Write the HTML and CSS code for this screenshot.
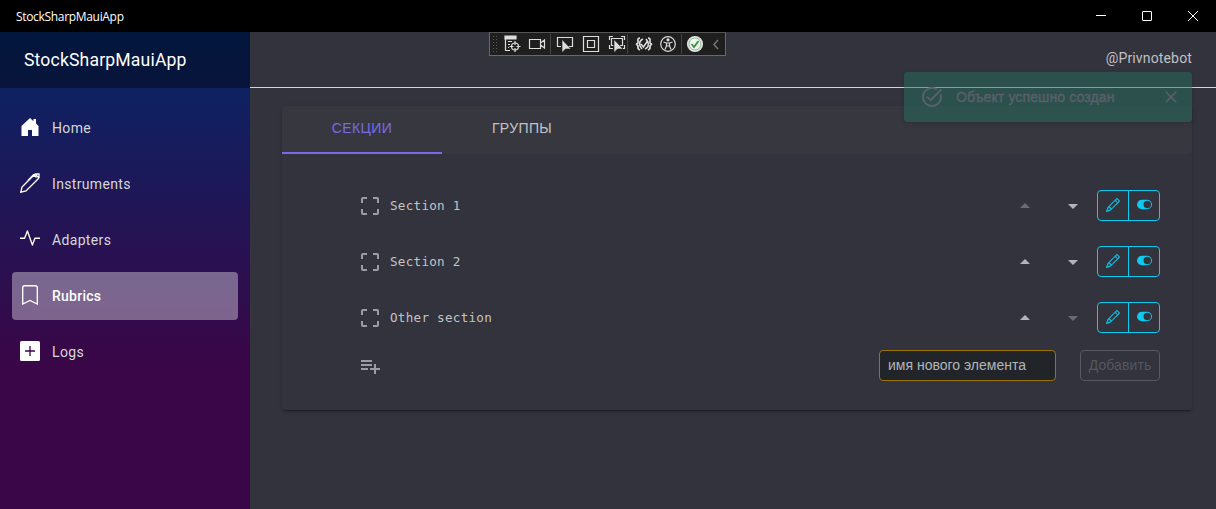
FILE: index.html
```html
<!DOCTYPE html>
<html lang="ru">
<head>
<meta charset="utf-8">
<title>StockSharpMauiApp</title>
<link rel="stylesheet" href="styles.css">
</head>
<body>
<svg width="0" height="0" class="defs">
  <symbol id="pencil" viewBox="0 0 16 16"><path d="M12.146.146a.5.5 0 0 1 .708 0l3 3a.5.5 0 0 1 0 .708l-10 10a.5.5 0 0 1-.168.11l-5 2a.5.5 0 0 1-.65-.65l2-5a.5.5 0 0 1 .11-.168l10-10zM11.207 2.5 13.5 4.793 14.793 3.5 12.5 1.207 11.207 2.5zm1.586 3L10.5 3.207 4 9.707V10h.5a.5.5 0 0 1 .5.5v.5h.5a.5.5 0 0 1 .5.5v.5h.293l6.5-6.5zm-9.761 5.175-.106.106-1.528 3.821 3.821-1.528.106-.106A.5.5 0 0 1 5 12.500V12h-.5a.5.5 0 0 1-.5-.5V11h-.5a.5.5 0 0 1-.468-.325z"/></symbol>
  <symbol id="toggle" viewBox="0 0 16 16"><path fill-rule="evenodd" d="M5 3a5 5 0 0 0 0 10h6a5 5 0 0 0 0-10H5zm6 9a4 4 0 1 1 0-8 4 4 0 0 1 0 8z"/></symbol>
  <symbol id="scan" viewBox="0 0 24 24"><path d="M3 5v4h2V5h4V3H5a2 2 0 0 0-2 2zm2 10H3v4a2 2 0 0 0 2 2h4v-2H5v-4zm14 4h-4v2h4a2 2 0 0 0 2-2v-4h-2v4zm0-16h-4v2h4v4h2V5a2 2 0 0 0-2-2z"/></symbol>
  <symbol id="up" viewBox="0 0 24 24"><path d="m7 14 5-5 5 5z"/></symbol>
  <symbol id="down" viewBox="0 0 24 24"><path d="m7 10 5 5 5-5z"/></symbol>
</svg>

<header class="titlebar">
  <span class="window-title">StockSharpMauiApp</span>
  <div class="window-buttons">
    <svg viewBox="0 0 12 12"><path d="M1 5.5h10"/></svg>
    <svg viewBox="0 0 12 12"><rect x="1.5" y="1.5" width="9" height="9" rx=".5"/></svg>
    <svg viewBox="0 0 12 12"><path d="m1 1 10 10M11 1 1 11"/></svg>
  </div>
</header>

<div class="page">
  <aside class="sidebar">
    <div class="brand">StockSharpMauiApp</div>
    <nav class="nav">
      <a class="nav-item"><svg class="nav-icon" viewBox="0 0 20 20"><path fill="#fff" d="M10 1 1.500 9v10H8v-6h4v6h6.500V9L16 6.500V2h-2.500v2.200z"/></svg>Home</a>
      <a class="nav-item"><svg class="nav-icon line" viewBox="0 0 20 20"><path d="M.8 19.200 2 14 14 1.900l1.500-.9h3.500v3.500l-1 1.500L6 18z M8 7.500l5.500-5.800 3 2.800M15.500 1.500l3 3"/></svg>Instruments</a>
      <a class="nav-item"><svg class="nav-icon line" viewBox="0 0 20 20"><path stroke-linejoin="round" d="M0 9.200h4.600L7.400 2l5 14 2.500-6.800H20"/></svg>Adapters</a>
      <a class="nav-item active"><svg class="nav-icon line" viewBox="0 0 20 20"><path d="M2.700 19V2.700Q2.700.7 4.700.7h10.600q2 0 2 2V19L10 15.500z"/></svg>Rubrics</a>
      <a class="nav-item"><svg class="nav-icon" viewBox="0 0 20 20"><rect width="20" height="20" rx="1.500" fill="#fff"/><path stroke="#3a0647" stroke-width="1.300" d="M5 10h10M10 5v10"/></svg>Logs</a>
    </nav>
  </aside>

  <main class="main">
    <div class="top-row">@Privnotebot</div>
    <section class="card">
      <div class="tabs">
        <div class="tab selected">СЕКЦИИ</div>
        <div class="tab">ГРУППЫ</div>
      </div>
      <div class="panel">
        <div class="row">
          <svg class="glyph"><use href="#scan"/></svg><span class="name">Section 1</span>
          <svg class="arrow off"><use href="#up"/></svg><svg class="arrow"><use href="#down"/></svg>
          <div class="actions"><button><svg><use href="#pencil"/></svg></button><button><svg class="toggle"><use href="#toggle"/></svg></button></div>
        </div>
        <div class="row">
          <svg class="glyph"><use href="#scan"/></svg><span class="name">Section 2</span>
          <svg class="arrow"><use href="#up"/></svg><svg class="arrow"><use href="#down"/></svg>
          <div class="actions"><button><svg><use href="#pencil"/></svg></button><button><svg class="toggle"><use href="#toggle"/></svg></button></div>
        </div>
        <div class="row">
          <svg class="glyph"><use href="#scan"/></svg><span class="name">Other section</span>
          <svg class="arrow"><use href="#up"/></svg><svg class="arrow off"><use href="#down"/></svg>
          <div class="actions"><button><svg><use href="#pencil"/></svg></button><button><svg class="toggle"><use href="#toggle"/></svg></button></div>
        </div>
        <div class="add-row">
          <svg class="glyph" viewBox="0 0 24 24"><path d="M14 10H3v2h11v-2zm0-4H3v2h11V6zm4 8v-4h-2v4h-4v2h4v4h2v-4h4v-2h-4zM3 16h7v-2H3v2z"/></svg>
          <input class="name-input" type="text" placeholder="имя нового элемента">
          <button class="add" disabled>Добавить</button>
        </div>
      </div>
    </section>
  </main>
</div>

<div class="debugbar">
  <span class="grip"></span>
  <svg viewBox="0 0 18 18" class="d1"><path fill="#ddd" d="M2 1h11v3H2z"/><path d="M2.500 4v11.500H7M5 6.500h4M5 9.500h2M5 12.500h1"/><circle cx="12" cy="11.500" r="3.500"/><path d="M12 6v4M12 13v4M6.500 11.500h4M13.500 11.500h4"/></svg>
  <svg viewBox="0 0 18 18" class="d2"><path d="M1.500 4.500h11v9h-11zM12.500 8l4-3v8l-4-3"/></svg>
  <i></i>
  <svg viewBox="0 0 18 18" class="d3"><path d="M5 11.500H1.500v-9h15v9H12"/><path class="solid" d="M6 4.500v13l3.500-3.500H15z"/></svg>
  <svg viewBox="0 0 18 18" class="d4"><path d="M1.500 1.500h15v15h-15zM5.500 5.500h7v7h-7z"/></svg>
  <svg viewBox="0 0 18 18" class="d5"><path d="M1.500 5V1.500H5M13 1.500h3.500V5M16.500 10v3.500H13M5 13.500H1.500V10M5.500 10.500h-2v-7h11v7h-3"/><path class="solid" d="M6 4.500v13l3.500-3.500H15z"/></svg>
  <i></i>
  <svg viewBox="0 0 18 18" class="d6"><path stroke-width="1.700" d="M5 3Q2.500 3 3 6T1 9.200Q3.500 10 3 12t2 3M13 3q2.500 0 2 3t2 3.200Q14.500 10 15 12t-2 3"/><path stroke-width="1.500" d="M8 4Q3.500 6 5 11l2 3M10 14q4.500-2 3-7l-2-3M6 9l2.500 3 4-6"/></svg>
  <svg viewBox="0 0 18 18" class="d7"><circle cx="9" cy="9" r="7.300"/><circle cx="9" cy="4.800" r="1" fill="#ddd"/><path d="m4.500 7 3 1h3l3-1M7.500 8v3L6 14.500M10.500 8v3l1.500 3.500M7.500 11h3"/></svg>
  <i></i>
  <svg viewBox="0 0 18 18" class="d8"><circle cx="9" cy="9" r="7.500" fill="#f4f4f4" stroke="#dcdcdc"/><circle cx="9" cy="9" r="6" stroke="#68ad6b" stroke-width=".8"/><path stroke="#2f9638" stroke-width="1.800" d="m5.500 9 2.500 3 4.500-6"/></svg>
  <svg viewBox="0 0 18 18" class="d9"><path stroke="#777" stroke-width="1.500" d="m11 5-4 4.500 4 4.500"/></svg>
</div>

<div class="toast">
  <svg viewBox="0 0 24 24" class="toast-ok"><path d="M22 5.180 10.590 16.600l-4.240-4.240 1.410-1.410 2.830 2.830 10-10L22 5.180zm-2.210 5.040c.13.570.21 1.170.21 1.780 0 4.420-3.580 8-8 8s-8-3.580-8-8 3.580-8 8-8c1.580 0 3.040.46 4.280 1.250l1.440-1.440A9.900 9.900 0 0 0 12 2C6.480 2 2 6.480 2 12s4.480 10 10 10 10-4.480 10-10c0-1.190-.22-2.330-.6-3.390l-1.610 1.610z"/></svg>
  <span>Объект успешно создан</span>
  <svg viewBox="0 0 24 24" class="toast-close"><path d="M19 6.410 17.590 5 12 10.590 6.410 5 5 6.410 10.590 12 5 17.590 6.410 19 12 13.410 17.590 19 19 17.590 13.410 12z"/></svg>
</div>
</body>
</html>
```
FILE: styles.css
```css
* { box-sizing: border-box; }
body {
  margin: 0;
  height: 509px;
  overflow: hidden;
  display: flex;
  flex-direction: column;
  background: #32333d;
  color: rgba(255,255,255,.7);
  font: 14px Roboto, sans-serif;
}
.defs { position: absolute; }
svg { display: block; flex: none; }

.titlebar {
  height: 32px;
  flex: none;
  display: flex;
  align-items: center;
  justify-content: space-between;
  padding: 0 17px 0 16px;
  background: #000;
  color: #fff;
}
.window-title { font: 12px "Open Sans", sans-serif; letter-spacing: -.32px; }
.window-buttons { display: flex; gap: 34px; }
.window-buttons svg { width: 12px; height: 12px; fill: none; stroke: #fff; }

.page { flex: 1; display: flex; min-height: 0; }
.sidebar {
  width: 250px;
  flex: none;
  background: linear-gradient(180deg, #052767 0%, #3a0647 70%);
}
.brand {
  height: 56px;
  padding-left: 24px;
  line-height: 56px;
  background: rgba(0,0,0,.4);
  color: #fff;
  font-size: 17.6px;
  letter-spacing: .16px;
}
.nav { padding: 16px 12px; display: flex; flex-direction: column; gap: 8px; }
.nav-item {
  height: 48px;
  display: flex;
  align-items: center;
  gap: 12px;
  padding-left: 8px;
  border-radius: 4px;
  color: #d7d7d7;
  letter-spacing: .34px;
}
.nav-item.active { background: rgba(255,255,255,.37); color: #fff; font-weight: 500; letter-spacing: .25px; }
.nav-icon { width: 20px; height: 20px; margin-top: -2px; }
.line { fill: none; stroke: #fff; stroke-width: 1.35; }

.main { flex: 1; display: flex; flex-direction: column; }
.top-row {
  height: 56px;
  flex: none;
  padding-right: 24px;
  border-bottom: 1px solid #d6d5d5;
  text-align: right;
  line-height: 53px;
  color: #c1c1c4;
  letter-spacing: .15px;
}
.card {
  height: 304px;
  margin: 18px 24px 0 32px;
  border-radius: 4px;
  box-shadow: 0 3px 1px -2px rgba(0,0,0,.2), 0 2px 2px rgba(0,0,0,.14), 0 1px 5px rgba(0,0,0,.12);
}
.tabs { height: 48px; display: flex; background: #373740; border-radius: 4px; }
.tab {
  width: 160px;
  text-align: center;
  line-height: 45px;
  font-family: "Liberation Sans", sans-serif;
  letter-spacing: .37px;
  color: #c3c3c5;
}
.tab.selected { color: #776be7; border-bottom: 2px solid #776be7; }
.panel { padding: 24px 32px 0 76px; }
.row { height: 56px; display: flex; align-items: center; }
.glyph { width: 24px; height: 24px; fill: #9c9ca3; }
.name {
  flex: 1;
  padding: 0 0 2px 8px;
  font: 12.6px "DejaVu Sans Mono", monospace;
  letter-spacing: .27px;
  color: #c3c3c6;
}
.arrow { width: 24px; height: 24px; margin-right: 24px; fill: #b5b5b9; }
.arrow.off { fill: #696a72; }
.actions {
  width: 63px;
  height: 31px;
  margin: 0 0 1px -12px;
  display: flex;
  border: 1px solid #0dcaf0;
  border-radius: 4px;
}
.actions button {
  flex: 1;
  display: flex;
  align-items: center;
  justify-content: center;
  padding: 0 0 1px;
  border: 0;
  background: none;
}
.actions button + button { border-left: 1px solid #0dcaf0; }
.actions svg { width: 14px; height: 14px; fill: #0dcaf0; stroke: #0dcaf0; stroke-width: .35; }
.actions .toggle { width: 15px; height: 15px; margin-bottom: 1px; stroke: none; }
.add-row { display: flex; align-items: center; padding-top: 4px; }
.name-input {
  width: 177px;
  height: 31px;
  margin-left: auto;
  padding: 0 8px 2px;
  border: 1px solid #997404;
  border-radius: 4px;
  background: #212529;
  color: #adb5bd;
  font: 14px "Liberation Sans", sans-serif;
  letter-spacing: 0;
}
.name-input::placeholder { color: #b2b5b8; opacity: 1; }
.add {
  width: 80px;
  height: 31px;
  margin-left: 24px;
  padding: 0 0 2px;
  border: 1px solid #555963;
  border-radius: 4px;
  background: none;
  color: #535761;
  font: 14px "Liberation Sans", sans-serif;
  letter-spacing: .1px;
}

/* Debug toolbar floats over the page */
.debugbar {
  position: absolute;
  top: 32px;
  left: 489px;
  width: 237px;
  height: 24px;
  display: flex;
  align-items: center;
  border: 1px solid #696969;
  border-top-color: #555;
  background: #1f1f1f;
}
.debugbar svg { width: 18px; height: 18px; fill: none; stroke: #ddd; stroke-width: 1.2; }
.debugbar .solid { fill: #ddd; stroke: #1f1f1f; stroke-width: .6; }
.debugbar i { flex: none; width: 1px; height: 20px; background: #444; }
.grip {
  flex: none;
  width: 6px;
  height: 18px;
  margin-left: 2px;
  background: radial-gradient(circle, #575757 30%, transparent 40%) 0 0 / 3px 3px;
}
.d1 { margin-left: 5px; }
.d2 { margin: 0 4px 0 7px; }
.d3 { margin-left: 5px; }
.d4 { margin-left: 8px; }
.d5 { margin: 0 1px 0 8px; }
.debugbar .d6 { margin-left: 7px; }
.debugbar .d7 { margin: 0 4px 0 6px; }
.d8 { margin-left: 4px; }
.debugbar .d9 { margin: 0 -4px 0 3px; }

/* Snackbar mid-fade */
.toast {
  position: absolute;
  top: 72px;
  right: 24px;
  width: 288px;
  height: 50px;
  display: flex;
  align-items: center;
  padding: 0 12px 0 16px;
  border-radius: 4px;
  background: rgba(38,111,93,.5);
  box-shadow: 0 2px 5px rgba(0,0,0,.12);
  color: #5b5f69;
  font: 14px "Liberation Sans", sans-serif;
  letter-spacing: .12px;
  -webkit-text-stroke: .4px #5b5f69;
}
.toast svg { fill: #5b5f69; }
.toast span { flex: 1; padding: 0 0 1px 12px; }
.toast-ok { width: 24px; height: 24px; }
.toast-close { width: 20px; height: 20px; margin-right: -1px; }
```
